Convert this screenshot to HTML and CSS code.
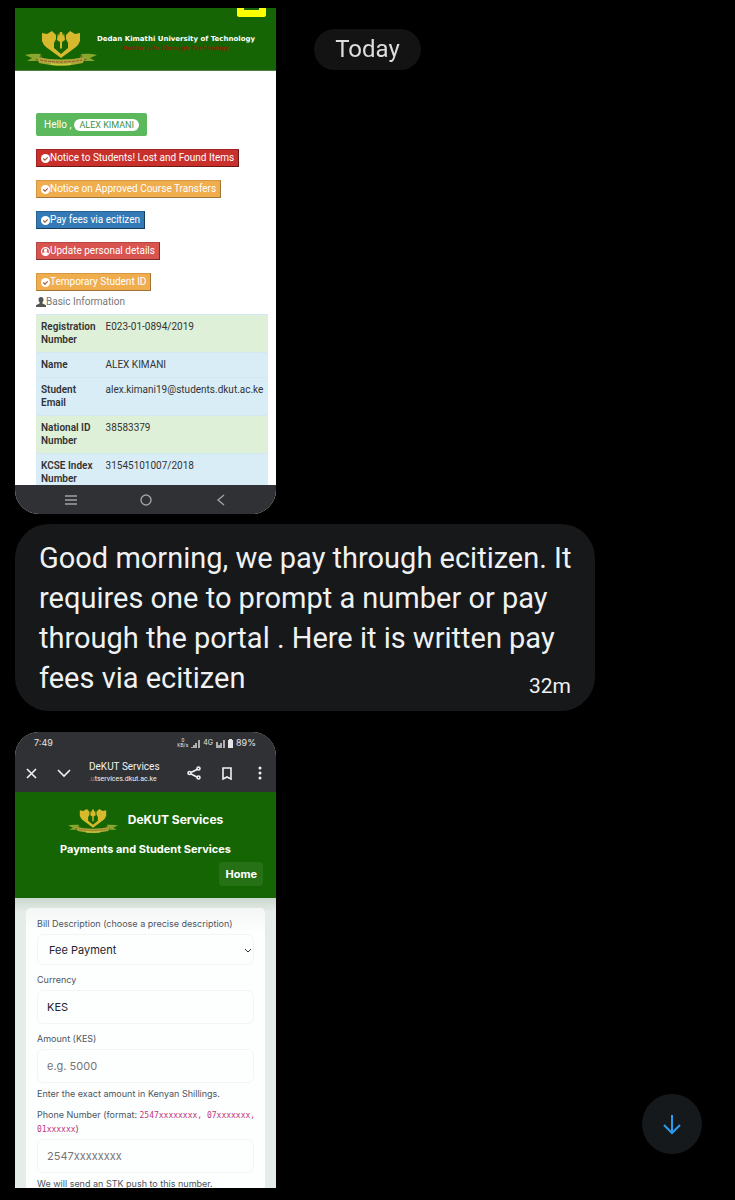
FILE: index.html
```
<!DOCTYPE html>
<html lang="en">
<head>
<meta charset="utf-8"/>
<meta name="viewport" content="width=device-width, initial-scale=1"/>
<title>Messages</title>
<link rel="stylesheet" href="styles.css">
</head>

<body>

<svg class="symbols" aria-hidden="true">
	<symbol id="crest" viewBox="0 0 72 38">
		<path id="wing" fill="#d8b92e" d="M17 5l5 1 5-3 4 4v4l-2 4v5l7 6v4L21 19l-2-2-1-2-1-2z"/>
		<use href="#wing" transform="matrix(-1 0 0 1 72 0)"/>
		<path fill="#d8b92e" d="M32 12l1-7 1 3 1-4h2l1 4 1-3 1 7-3 2v6l-1 1-1-1v-6z"/>
		<path fill="#156504" d="M36 5v9"/>
		<path fill="#8aa62d" d="M0 27q7-2 16-1l-3 7H2l5-3zM72 27q-7-2-16-1l3 7h11l-5-3z"/>
		<path fill="#687024" d="M10 32l7-5v6zM62 32l-7-5v6z"/>
		<path fill="#a9a838" d="M12 29q24 5 48 0l-2 6q-22 5-44 0z"/>
		<path fill="#c9cb3c" d="M26 35q10 2 20 0v2q-10 1-20 0z"/>
		<path fill="none" stroke="#a0522a" stroke-dasharray="3 1" d="M15 32q21 4 42 0"/>
	</symbol>
	<symbol id="check" viewBox="0 0 16 16">
		<circle cx="8" cy="8" r="8" fill="currentColor"/>
		<path class="tick" d="M4 8l3 3 5-5"/>
	</symbol>
	<symbol id="user-circle" viewBox="0 0 16 16">
		<circle cx="8" cy="8" r="7" fill="none" stroke="currentColor" stroke-width="2"/>
		<circle cx="8" cy="6" r="3" fill="currentColor"/>
		<path fill="currentColor" d="M3 13q0-4 5-4t5 4q-5 4-10 0z"/>
	</symbol>
	<symbol id="user" viewBox="0 0 16 16">
		<path fill="currentColor" d="M4 4q0-4 4-4t4 4q0 3-2 5v1l6 3v3H0v-3l6-3V9Q4 7 4 4z"/>
	</symbol>
</svg>

<div class="day"><span>Today</span></div>

<main class="chat">

<section class="shot portal">
	<header class="portal_head">
		<button class="menu_button" aria-label="Menu"></button>
		<svg class="portal_logo"><use href="#crest"/></svg>
		<div class="portal_title">
			<h1>Dedan Kimathi University of Technology</h1>
			<p>Better Life Through Technology</p>
		</div>
	</header>

	<div class="portal_body">
		<div class="hello">Hello , <span>ALEX KIMANI</span></div>
		<div class="notices">
			<button class="dark_red"><svg><use href="#check"/></svg>Notice to Students! Lost and Found Items</button>
			<button class="orange"><svg><use href="#check"/></svg>Notice on Approved Course Transfers</button>
			<button class="blue"><svg><use href="#check"/></svg>Pay fees via ecitizen</button>
			<button class="red"><svg><use href="#user-circle"/></svg>Update personal details</button>
			<button class="orange"><svg><use href="#check"/></svg>Temporary Student ID</button>
		</div>
		<div class="basic"><svg><use href="#user"/></svg>Basic Information</div>
		<table class="info">
			<tr class="green"><th>Registration Number</th><td>E023-01-0894/2019</td></tr>
			<tr><th>Name</th><td>ALEX KIMANI</td></tr>
			<tr><th>Student Email</th><td>alex.kimani19@students.dkut.ac.ke</td></tr>
			<tr class="green"><th>National ID Number</th><td>38583379</td></tr>
			<tr><th>KCSE Index Number</th><td>31545101007/2018</td></tr>
		</table>
	</div>

	<nav class="phone_nav">
		<button aria-label="Recent apps"><svg viewBox="0 0 14 14"><path d="M1 3h12M1 7h12M1 11h12"/></svg></button>
		<button aria-label="Home"><svg viewBox="0 0 14 14"><circle cx="7" cy="7" r="5"/></svg></button>
		<button aria-label="Back"><svg viewBox="0 0 14 14"><path d="M10 2L4 7l6 5"/></svg></button>
	</nav>
</section>

<article class="bubble">
	<p>Good morning, we pay through ecitizen. It requires one to prompt a number or pay through the portal . Here it is written pay fees via ecitizen <time>32m</time></p>
</article>

<section class="shot services">
	<div class="status">
		<span class="clock">7:49</span>
		<span class="rate">0<br>KB/s</span>
		<svg class="signal" viewBox="0 0 9 9"><path d="M1 8v1M3 6v3M5 4v5M8 1v8"/></svg>
		<span class="network">4G</span>
		<svg class="signal" viewBox="0 0 9 9"><path d="M1 3v6M3 6v3M5 4v5M8 1v8"/></svg>
		<svg class="battery" viewBox="0 0 5 9"><path d="M1 0h3v1h1v8H0V1h1z"/></svg>
		<span>89%</span>
	</div>

	<div class="browser">
		<button aria-label="Close"><svg viewBox="0 0 16 16"><path d="M4 4l9 9M13 4l-9 9"/></svg></button>
		<button aria-label="Minimise"><svg viewBox="0 0 16 16"><path d="M2 5l6 6 6-6"/></svg></button>
		<div class="address">
			<div>DeKUT Services</div>
			<small><span>.u</span>tservices.dkut.ac.ke</small>
		</div>
		<button aria-label="Share"><svg viewBox="0 0 16 16"><path d="M11 4.500L5 7.500M5 9l6 3"/><circle cx="12.500" cy="3.500" r="1.500"/><circle cx="3.500" cy="8" r="1.500"/><circle cx="12.500" cy="12.500" r="1.500"/></svg></button>
		<button aria-label="Bookmark"><svg viewBox="0 0 16 16"><path d="M4 3h8v11l-4-2-4 2z"/></svg></button>
		<button aria-label="More"><svg viewBox="0 0 16 16"><g class="solid"><circle cx="8" cy="3" r="1.500"/><circle cx="8" cy="8" r="1.500"/><circle cx="8" cy="13" r="1.500"/></g></svg></button>
	</div>

	<header class="services_head">
		<div class="brand"><svg><use href="#crest"/></svg><h2>DeKUT Services</h2></div>
		<p>Payments and Student Services</p>
		<a class="home" href="#home">Home</a>
	</header>

	<div class="services_body">
		<form class="payment">
			<label for="bill">Bill Description (choose a precise description)</label>
			<div class="select_box">
				<select id="bill"><option>Fee Payment</option></select>
				<svg viewBox="0 0 8 8"><path d="M1 3l3 3 3-3"/></svg>
			</div>
			<label for="currency">Currency</label>
			<input id="currency" type="text" value="KES">
			<label for="amount">Amount (KES)</label>
			<input id="amount" type="text" placeholder="e.g. 5000">
			<p class="hint">Enter the exact amount in Kenyan Shillings.</p>
			<label for="phone">Phone Number (format: <code>2547xxxxxxxx, 07xxxxxxx, 01xxxxxx</code>)</label>
			<input id="phone" type="text" placeholder="2547xxxxxxxx">
			<p class="hint">We will send an STK push to this number.</p>
		</form>
	</div>
</section>

</main>

<button class="to_bottom" aria-label="Scroll to bottom"><svg viewBox="0 0 24 24"><path d="M12 3v17M4 13l8 8 8-8"/></svg></button>

</body>
</html>
```
FILE: styles.css
```
* {
box-sizing: border-box;
}

body {
margin: 0;
background: #000000;
color: #eff1f2;
font: 10px/14px Inter, sans-serif;
}

h1, h2, p {
margin: 0;
}

button {
border: 0;
padding: 0;
background: none;
color: inherit;
font: inherit;
}

.symbols {
display: none;
}

.tick {
fill: none;
stroke: #a05a30;
stroke-width: 2;
}


/* floating parts of the chat */


.day {
position: fixed;
top: 29px;
left: 0;
right: 0;
text-align: center;
}

.day span {
display: inline-block;
padding: 0 21px;
border-radius: 21px;
background: #131313;
color: #dddddd;
font: 24px/41px Roboto, sans-serif;
}

.to_bottom {
position: fixed;
right: 33px;
bottom: 46px;
width: 60px;
height: 60px;
border-radius: 50%;
background: #15191c;
}

.to_bottom svg {
display: block;
width: 24px;
margin: auto;
fill: none;
stroke: #2a9bee;
stroke-width: 2;
}


/* message list */


.chat {
padding: 8px 15px 13px;
}

.shot {
max-width: 261px;
overflow: hidden;
}

.bubble {
max-width: 580px;
margin: 10px 0 21px;
padding: 14px 20px 13px 24px;
border-radius: 34px;
background: #16181a;
}

.bubble p {
font: 29px/40px Roboto, sans-serif;
}

/* sits at the right end of the last line */
.bubble time {
float: right;
margin: 16px 4px 0 0;
font: 21px/24px Roboto, sans-serif;
}


/* student portal */


.portal {
border-radius: 0 0 24px 24px;
background: #ffffff;
color: #333333;
font-family: Roboto, sans-serif;
}

.portal_head {
position: relative;
display: flex;
align-items: flex-end;
height: 63px;
padding: 0 10px 4px;
border-bottom: 1px solid #4f7f43;
background: #156504;
}

.menu_button {
position: absolute;
top: 0;
right: 10px;
width: 29px;
height: 9px;
border: solid #ffff00;
border-width: 0 7px 7px;
border-radius: 0 0 3px 3px;
}

.portal_logo {
flex: none;
width: 72px;
height: 38px;
}

.portal_title {
align-self: flex-start;
padding-top: 26px;
text-align: center;
white-space: nowrap;
}

.portal_title h1 {
font: bold 7px/10px "DejaVu Sans", sans-serif;
color: #ffffff;
}

.portal_title p {
font: italic bold 6px/8px "DejaVu Sans", sans-serif;
color: #7c2a08;
}

.portal_body {
height: 414px;
padding: 42px 8px 0 21px;
overflow: hidden;
}

.hello {
display: flex;
align-items: center;
gap: 3px;
width: max-content;
height: 23px;
padding: 0 8px;
border-radius: 2px;
background: #5cb85c;
color: #ffffff;
}

.hello span {
padding: 0 5px;
border-radius: 6px;
background: #ffffff;
color: #459345;
font-size: 9px;
line-height: 12px;
}

.notices {
display: flex;
flex-direction: column;
align-items: flex-start;
gap: 13px;
margin-top: 13px;
}

.notices button {
display: flex;
align-items: center;
height: 18px;
padding: 0 4px;
border: 1px solid;
color: #ffffff;
}

.notices svg {
width: 9px;
height: 9px;
}

.notices .dark_red {
background: #c9302c;
border-color: #a12422 #681917 #681917 #a12422;
}

.notices .orange {
background: #f0ad4e;
border-color: #d59743 #a17334 #a17334 #d59743;
}

.notices .blue {
background: #337ab7;
border-color: #286291 #173b5b #173b5b #286291;
}

.notices .red {
background: #d9534f;
border-color: #b54542 #7a2c2a #7a2c2a #b54542;
}

.basic {
display: flex;
align-items: center;
margin: 4px 0 5px;
color: #777777;
}

.basic svg {
width: 10px;
height: 10px;
color: #555555;
}

.info {
width: 100%;
border-collapse: collapse;
background: #d9edf7;
}

.info tr {
border-top: 1px solid #d3e9f1;
}

.info .green {
background: #dff0d8;
}

.info th, .info td {
padding: 5px 5px 6px;
text-align: left;
vertical-align: top;
line-height: 13px;
}

.info th {
width: 65px;
font-weight: 600;
}

.phone_nav {
display: flex;
justify-content: space-around;
align-items: center;
height: 29px;
padding: 0 18px;
background: #303134;
color: #a1a1a3;
}

.phone_nav svg {
display: block;
width: 14px;
fill: none;
stroke: currentColor;
stroke-width: 1.4;
}


/* payment page */


.services {
height: 456px;
border-radius: 24px 24px 0 0;
background: #e4ede7;
color: #111827;
}

.status {
display: flex;
align-items: center;
gap: 3px;
height: 22px;
padding: 0 20px 0 19px;
background: #303134;
color: #e5e5e6;
font-size: 9px;
}

.clock {
flex: 1;
}

.rate {
font: 5px/5px Roboto, sans-serif;
text-align: center;
}

.network {
font-size: 7px;
}

.signal {
width: 9px;
height: 9px;
stroke: currentColor;
stroke-width: 1.4;
}

.battery {
width: 5px;
height: 9px;
fill: currentColor;
}

.browser {
display: flex;
align-items: center;
gap: 17px;
height: 38px;
padding: 0 8px;
background: #303134;
color: #f1f1f2;
}

.browser svg {
display: block;
width: 16px;
fill: none;
stroke: currentColor;
stroke-width: 1.6;
}

.browser .solid {
fill: currentColor;
stroke: none;
}

.address {
flex: 1;
font: 10px/12px Roboto, sans-serif;
white-space: nowrap;
}

.address small {
display: block;
font-size: 7px;
}

.address small span {
opacity: 0.4;
}

.services_head {
display: flex;
flex-direction: column;
align-items: center;
height: 106px;
padding: 14px 13px 0;
background: #156504;
color: #ffffff;
}

.brand {
display: flex;
align-items: center;
gap: 10px;
}

.brand svg {
width: 50px;
height: 28px;
}

.brand h2 {
font-size: 12px;
}

.services_head p {
margin: 8px 0 6px;
font-size: 11px;
font-weight: 700;
}

.home {
align-self: flex-end;
padding: 0 6px;
border-radius: 4px;
background: #267016;
color: #ffffff;
font-size: 11px;
font-weight: 700;
line-height: 24px;
text-decoration: none;
}

.services_body {
padding: 10px 11px 0;
background: linear-gradient(#cbd8ce, #e4ede7 14px);
}

.payment {
padding: 9px 11px 0;
border-radius: 5px;
background: linear-gradient(#f4f7f6, #fdfefe 24px);
}

.payment label {
display: block;
margin: 0 -5px 3px 0;
color: #4b5563;
font-size: 9px;
}

.payment input, .select_box {
display: block;
width: 100%;
height: 34px;
margin-bottom: 8px;
border: 1px solid #f3f5f5;
border-radius: 6px;
background: #fdfefe;
color: #1f2430;
font: 11px/14px Inter, sans-serif;
}

.payment input {
padding: 0 9px;
}

.payment input::placeholder {
color: #757575;
}

.select_box {
display: flex;
align-items: center;
height: 31px;
padding-right: 1px;
}

.select_box select {
flex: 1;
padding: 0 11px;
border: 0;
appearance: none;
background: none;
color: inherit;
font: inherit;
}

.select_box svg {
width: 8px;
fill: none;
stroke: #333333;
}

.payment .hint {
margin: -4px 0 7px;
color: #4b5563;
font-size: 9px;
}

.payment code {
color: #c2367e;
font: 8px/13px "DejaVu Sans Mono", monospace;
}
```
